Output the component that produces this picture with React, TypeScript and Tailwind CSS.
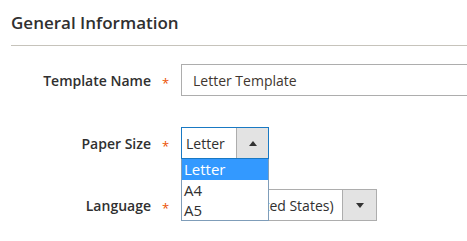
import React from "react";

function Star() {
  return (
    <div className="w-[30px] shrink-0 h-full flex items-center pl-[11px]">
      <span className="text-[#eb5202] text-[13px] leading-none mt-[6px]">*</span>
    </div>
  );
}

function Label({ text }: { text: string }) {
  return (
    <div className="w-[151px] shrink-0 text-right text-[14px] font-semibold leading-[19px] text-[#303030]">
      {text}
    </div>
  );
}

export default function App() {
  return (
    <div className="w-[467px] h-[241px] bg-white overflow-hidden font-['Open_Sans',sans-serif] text-[#303030] relative">
      {/* heading */}
      <div className="pl-[11px]">
        <h2 className="text-[17px] font-semibold leading-[22px] pt-[12px] pb-[11px] border-b border-[#c6c3bb] text-[#303030]">
          General Information
        </h2>
      </div>

      {/* Template Name */}
      <div className="flex items-center h-[32px] mt-[18px]">
        <Label text="Template Name" />
        <Star />
        <div className="w-[300px] shrink-0 h-full border border-[#adadad] flex items-center pl-[11px] text-[14px] text-[#41362f]">
          Letter Template
        </div>
      </div>

      {/* Paper Size */}
      <div className="flex items-center h-[32px] mt-[31px] relative z-10">
        <Label text="Paper Size" />
        <Star />
        <div className="relative w-[88px] shrink-0 h-full">
          <div className="w-full h-full border border-[#1979c3] flex">
            <div className="flex-1 flex items-center pl-[4px] text-[14px] text-[#303030]">Letter</div>
            <div className="w-[32px] h-full bg-[#e3e3e3] border-l border-[#adadad] flex items-center justify-center">
              <svg width="8" height="5" viewBox="0 0 8 5">
                <path d="M0 5 L4 0 L8 5 Z" fill="#333" />
              </svg>
            </div>
          </div>
          {/* open list */}
          <div className="absolute left-0 top-[32px] w-[88px] bg-white border border-[#7f9db9] border-t-0 text-[15px] leading-[20px]">
            <div className="h-[21px] bg-[#3399ff] text-white pl-[2px]">Letter</div>
            <div className="h-[20px] pl-[2px] text-[#303030]">A4</div>
            <div className="h-[20px] pl-[2px] text-[#303030]">A5</div>
          </div>
        </div>
      </div>

      {/* Language */}
      <div className="flex items-center h-[32px] mt-[30px]">
        <Label text="Language" />
        <Star />
        <div className="w-[196px] shrink-0 h-full border border-[#adadad] flex">
          <div className="flex-1 flex items-center pl-[6px] text-[14px] text-[#303030] whitespace-nowrap overflow-hidden">
            English (United States)
          </div>
          <div className="w-[34px] h-full bg-[#e3e3e3] border-l border-[#adadad] flex items-center justify-center">
            <svg width="8" height="5" viewBox="0 0 8 5">
              <path d="M0 0 L8 0 L4 5 Z" fill="#333" />
            </svg>
          </div>
        </div>
      </div>
    </div>
  );
}
